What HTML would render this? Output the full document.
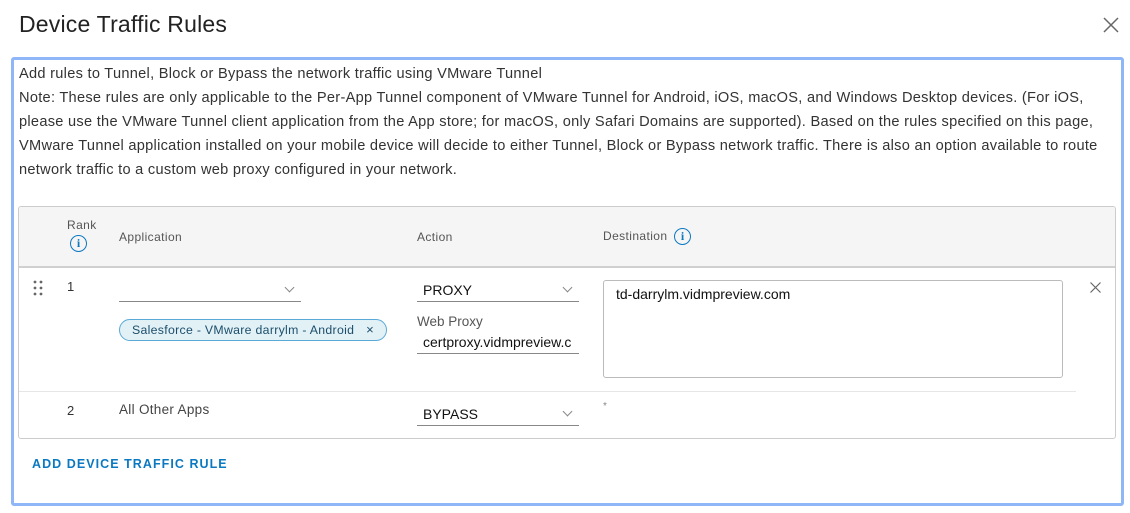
<!DOCTYPE html>
<html><head><style>
*{box-sizing:border-box;margin:0;padding:0}
body{width:1130px;height:513px;background:#fff;font-family:"Liberation Sans",sans-serif;color:#333;position:relative;overflow:hidden}
.a{position:absolute}
.t{font-size:23px;color:#222;left:19px;top:11px;letter-spacing:0.2px}
.frame{left:11px;top:57px;width:1113px;height:449px;border:3px solid #8fb6f7;border-radius:3px}
.desc{left:19px;top:62px;width:1092px;font-size:14.6px;line-height:24px;color:#333;letter-spacing:0.28px}
.tbl{left:18px;top:206px;width:1098px;height:233px;border:1px solid #ccc;border-radius:3px;overflow:hidden}
.hd{left:0;top:0;width:100%;height:61px;background:#f5f5f5;border-bottom:2px solid #d0d0d0}
.hl{font-size:12px;color:#555;letter-spacing:0.4px}
.sel{border-bottom:1px solid #888;height:24px;font-size:14px;color:#111}
.chev{position:absolute;right:8px;top:6px;width:7px;height:7px;border-right:1px solid #888;border-bottom:1px solid #888;transform:rotate(45deg)}
.info{width:17px;height:17px;border:1.5px solid #0b79c1;border-radius:50%;color:#0b79c1;font-size:12px;font-weight:bold;text-align:center;line-height:14px;font-family:"Liberation Serif",serif}
</style></head><body>
<div class="a t">Device Traffic Rules</div>
<svg class="a" style="left:1103px;top:17px" width="16" height="16"><path d="M1 1L15 15M15 1L1 15" stroke="#666" stroke-width="1.5"/></svg>
<div class="a frame"></div>
<div class="a desc">Add rules to Tunnel, Block or Bypass the network traffic using VMware Tunnel<br>Note: These rules are only applicable to the Per-App Tunnel component of VMware Tunnel for Android, iOS, macOS, and Windows Desktop devices. (For iOS, please use the VMware Tunnel client application from the App store; for macOS, only Safari Domains are supported). Based on the rules specified on this page, VMware Tunnel application installed on your mobile device will decide to either Tunnel, Block or Bypass network traffic. There is also an option available to route network traffic to a custom web proxy configured in your network.</div>
<div class="a tbl">
 <div class="a hd"></div>
 <div class="a hl" style="left:48px;top:11px">Rank</div>
 <div class="a info" style="left:51px;top:28px">i</div>
 <div class="a hl" style="left:100px;top:23px">Application</div>
 <div class="a hl" style="left:398px;top:23px">Action</div>
 <div class="a hl" style="left:584px;top:22px">Destination</div>
 <div class="a info" style="left:655px;top:21px">i</div>
 <svg class="a" style="left:14px;top:73px" width="10" height="16"><g fill="#666"><circle cx="2" cy="2" r="1.4"/><circle cx="8" cy="2" r="1.4"/><circle cx="2" cy="8" r="1.4"/><circle cx="8" cy="8" r="1.4"/><circle cx="2" cy="14" r="1.4"/><circle cx="8" cy="14" r="1.4"/></g></svg>
 <div class="a" style="left:48px;top:72px;font-size:13px">1</div>
 <div class="a sel" style="left:100px;top:71px;width:182px"><span class="chev"></span></div>
 <div class="a" style="left:100px;top:112px;width:268px;height:22px;border:1px solid #5aa9d6;background:#e1f1f6;border-radius:11px;font-size:12.3px;letter-spacing:0.3px;color:#1d4e6b;line-height:20px;padding-left:12px">Salesforce - VMware darrylm - Android<span style="position:absolute;right:12px;font-size:13px">×</span></div>
 <div class="a sel" style="left:398px;top:71px;width:162px;padding-left:6px;line-height:24px">PROXY<span class="chev"></span></div>
 <div class="a" style="left:398px;top:107px;font-size:13.5px;color:#555">Web Proxy</div>
 <div class="a sel" style="left:398px;top:123px;width:162px;padding-left:6px;line-height:24px;overflow:hidden;white-space:nowrap">certproxy.vidmpreview.c</div>
 <div class="a" style="left:584px;top:73px;width:460px;height:98px;border:1px solid #bbb;border-radius:3px;font-size:14px;color:#111;padding:5px 12px">td-darrylm.vidmpreview.com</div>
 <svg class="a" style="left:1071px;top:75px" width="11" height="11"><path d="M0.5 0.5L10.5 10.5M10.5 0.5L0.5 10.5" stroke="#666" stroke-width="1.2"/></svg>
 <div class="a" style="left:0;top:184px;width:1057px;border-top:1px solid #e6e6e6"></div>
 <div class="a" style="left:48px;top:196px;font-size:13px">2</div>
 <div class="a" style="left:100px;top:195px;font-size:13.5px;color:#444;letter-spacing:0.3px">All Other Apps</div>
 <div class="a sel" style="left:398px;top:195px;width:162px;padding-left:6px;line-height:24px">BYPASS<span class="chev"></span></div>
 <div class="a" style="left:584px;top:194px;font-size:10px;color:#888">*</div>
</div>
<div class="a" style="left:32px;top:457px;font-size:12.5px;letter-spacing:1.05px;color:#0b79c1;font-weight:bold">ADD DEVICE TRAFFIC RULE</div>
</body></html>
